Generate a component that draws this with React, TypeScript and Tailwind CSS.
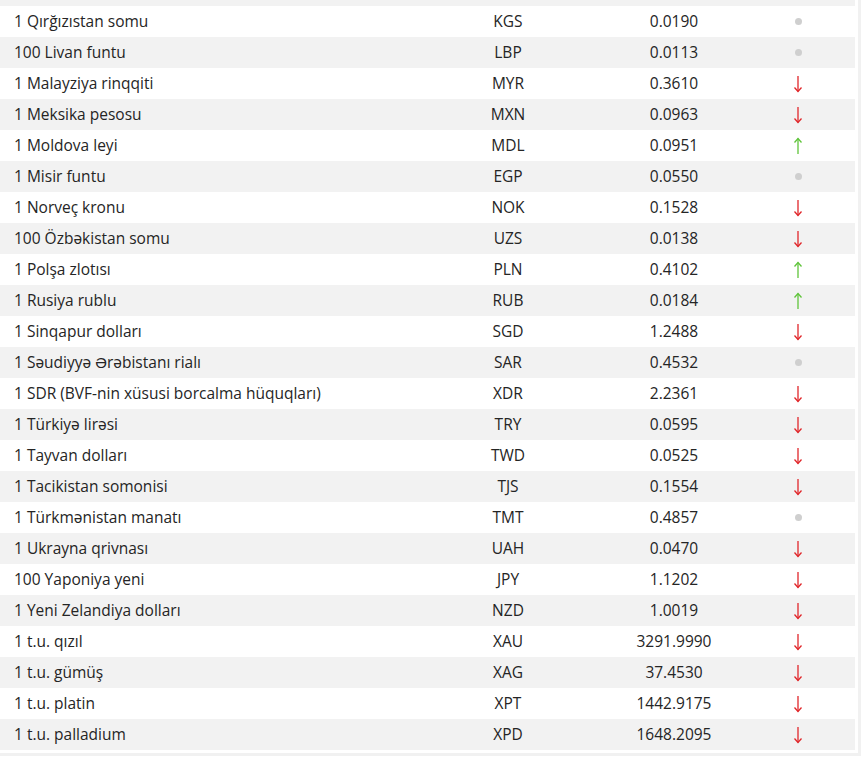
type Trend = 'up' | 'down' | 'same';

interface Rate {
  name: string;
  code: string;
  value: string;
  trend: Trend;
}

const rates: Rate[] = [
  { name: '1 Qırğızıstan somu', code: 'KGS', value: '0.0190', trend: 'same' },
  { name: '100 Livan funtu', code: 'LBP', value: '0.0113', trend: 'same' },
  { name: '1 Malayziya rinqqiti', code: 'MYR', value: '0.3610', trend: 'down' },
  { name: '1 Meksika pesosu', code: 'MXN', value: '0.0963', trend: 'down' },
  { name: '1 Moldova leyi', code: 'MDL', value: '0.0951', trend: 'up' },
  { name: '1 Misir funtu', code: 'EGP', value: '0.0550', trend: 'same' },
  { name: '1 Norveç kronu', code: 'NOK', value: '0.1528', trend: 'down' },
  { name: '100 Özbəkistan somu', code: 'UZS', value: '0.0138', trend: 'down' },
  { name: '1 Polşa zlotısı', code: 'PLN', value: '0.4102', trend: 'up' },
  { name: '1 Rusiya rublu', code: 'RUB', value: '0.0184', trend: 'up' },
  { name: '1 Sinqapur dolları', code: 'SGD', value: '1.2488', trend: 'down' },
  { name: '1 Səudiyyə Ərəbistanı rialı', code: 'SAR', value: '0.4532', trend: 'same' },
  { name: '1 SDR (BVF-nin xüsusi borcalma hüquqları)', code: 'XDR', value: '2.2361', trend: 'down' },
  { name: '1 Türkiyə lirəsi', code: 'TRY', value: '0.0595', trend: 'down' },
  { name: '1 Tayvan dolları', code: 'TWD', value: '0.0525', trend: 'down' },
  { name: '1 Tacikistan somonisi', code: 'TJS', value: '0.1554', trend: 'down' },
  { name: '1 Türkmənistan manatı', code: 'TMT', value: '0.4857', trend: 'same' },
  { name: '1 Ukrayna qrivnası', code: 'UAH', value: '0.0470', trend: 'down' },
  { name: '100 Yaponiya yeni', code: 'JPY', value: '1.1202', trend: 'down' },
  { name: '1 Yeni Zelandiya dolları', code: 'NZD', value: '1.0019', trend: 'down' },
  { name: '1 t.u. qızıl', code: 'XAU', value: '3291.9990', trend: 'down' },
  { name: '1 t.u. gümüş', code: 'XAG', value: '37.4530', trend: 'down' },
  { name: '1 t.u. platin', code: 'XPT', value: '1442.9175', trend: 'down' },
  { name: '1 t.u. palladium', code: 'XPD', value: '1648.2095', trend: 'down' },
];

const TrendIcon = ({ trend }: { trend: Trend }) => {
  if (trend === 'same') {
    return <span className="block w-[7px] h-[7px] rounded-full bg-[#cfcfcf]" />;
  }
  const color = trend === 'up' ? '#5fc43a' : '#e0262a';
  return (
    <svg width="10" height="18" viewBox="0 0 10 18" fill="none" stroke={color} strokeWidth="1.3">
      {trend === 'down' ? (
        <>
          <path d="M5 1 V16.5" />
          <path d="M1.5 12.5 L5 16.5 L8.5 12.5" />
        </>
      ) : (
        <>
          <path d="M5 17 V1.5" />
          <path d="M1.5 5.5 L5 1.5 L8.5 5.5" />
        </>
      )}
    </svg>
  );
};

export default function App() {
  return (
    <div className="h-[758px] overflow-hidden bg-white font-['Open_Sans',sans-serif] text-[15.5px] text-[#252525]">
      <div className="w-[861px] border-r-[3px] border-b-[3px] border-[#f1f1f1] pr-[3px] pb-[3px]">
        {/* tail of the previous row, scrolled out of view */}
        <div className="h-[6px] bg-[#f2f2f2]" />
        {rates.map((r, i) => (
          <div
            key={r.code}
            className={`flex items-center h-[31px] ${i % 2 === 1 ? 'bg-[#f2f2f2]' : 'bg-white'}`}
          >
            <div className="w-[430px] pl-[14px] whitespace-nowrap">{r.name}</div>
            <div className="w-[156px] text-center">{r.code}</div>
            <div className="w-[176px] text-center">{r.value}</div>
            <div className="w-[72px] flex justify-center">
              <TrendIcon trend={r.trend} />
            </div>
          </div>
        ))}
      </div>
    </div>
  );
}
